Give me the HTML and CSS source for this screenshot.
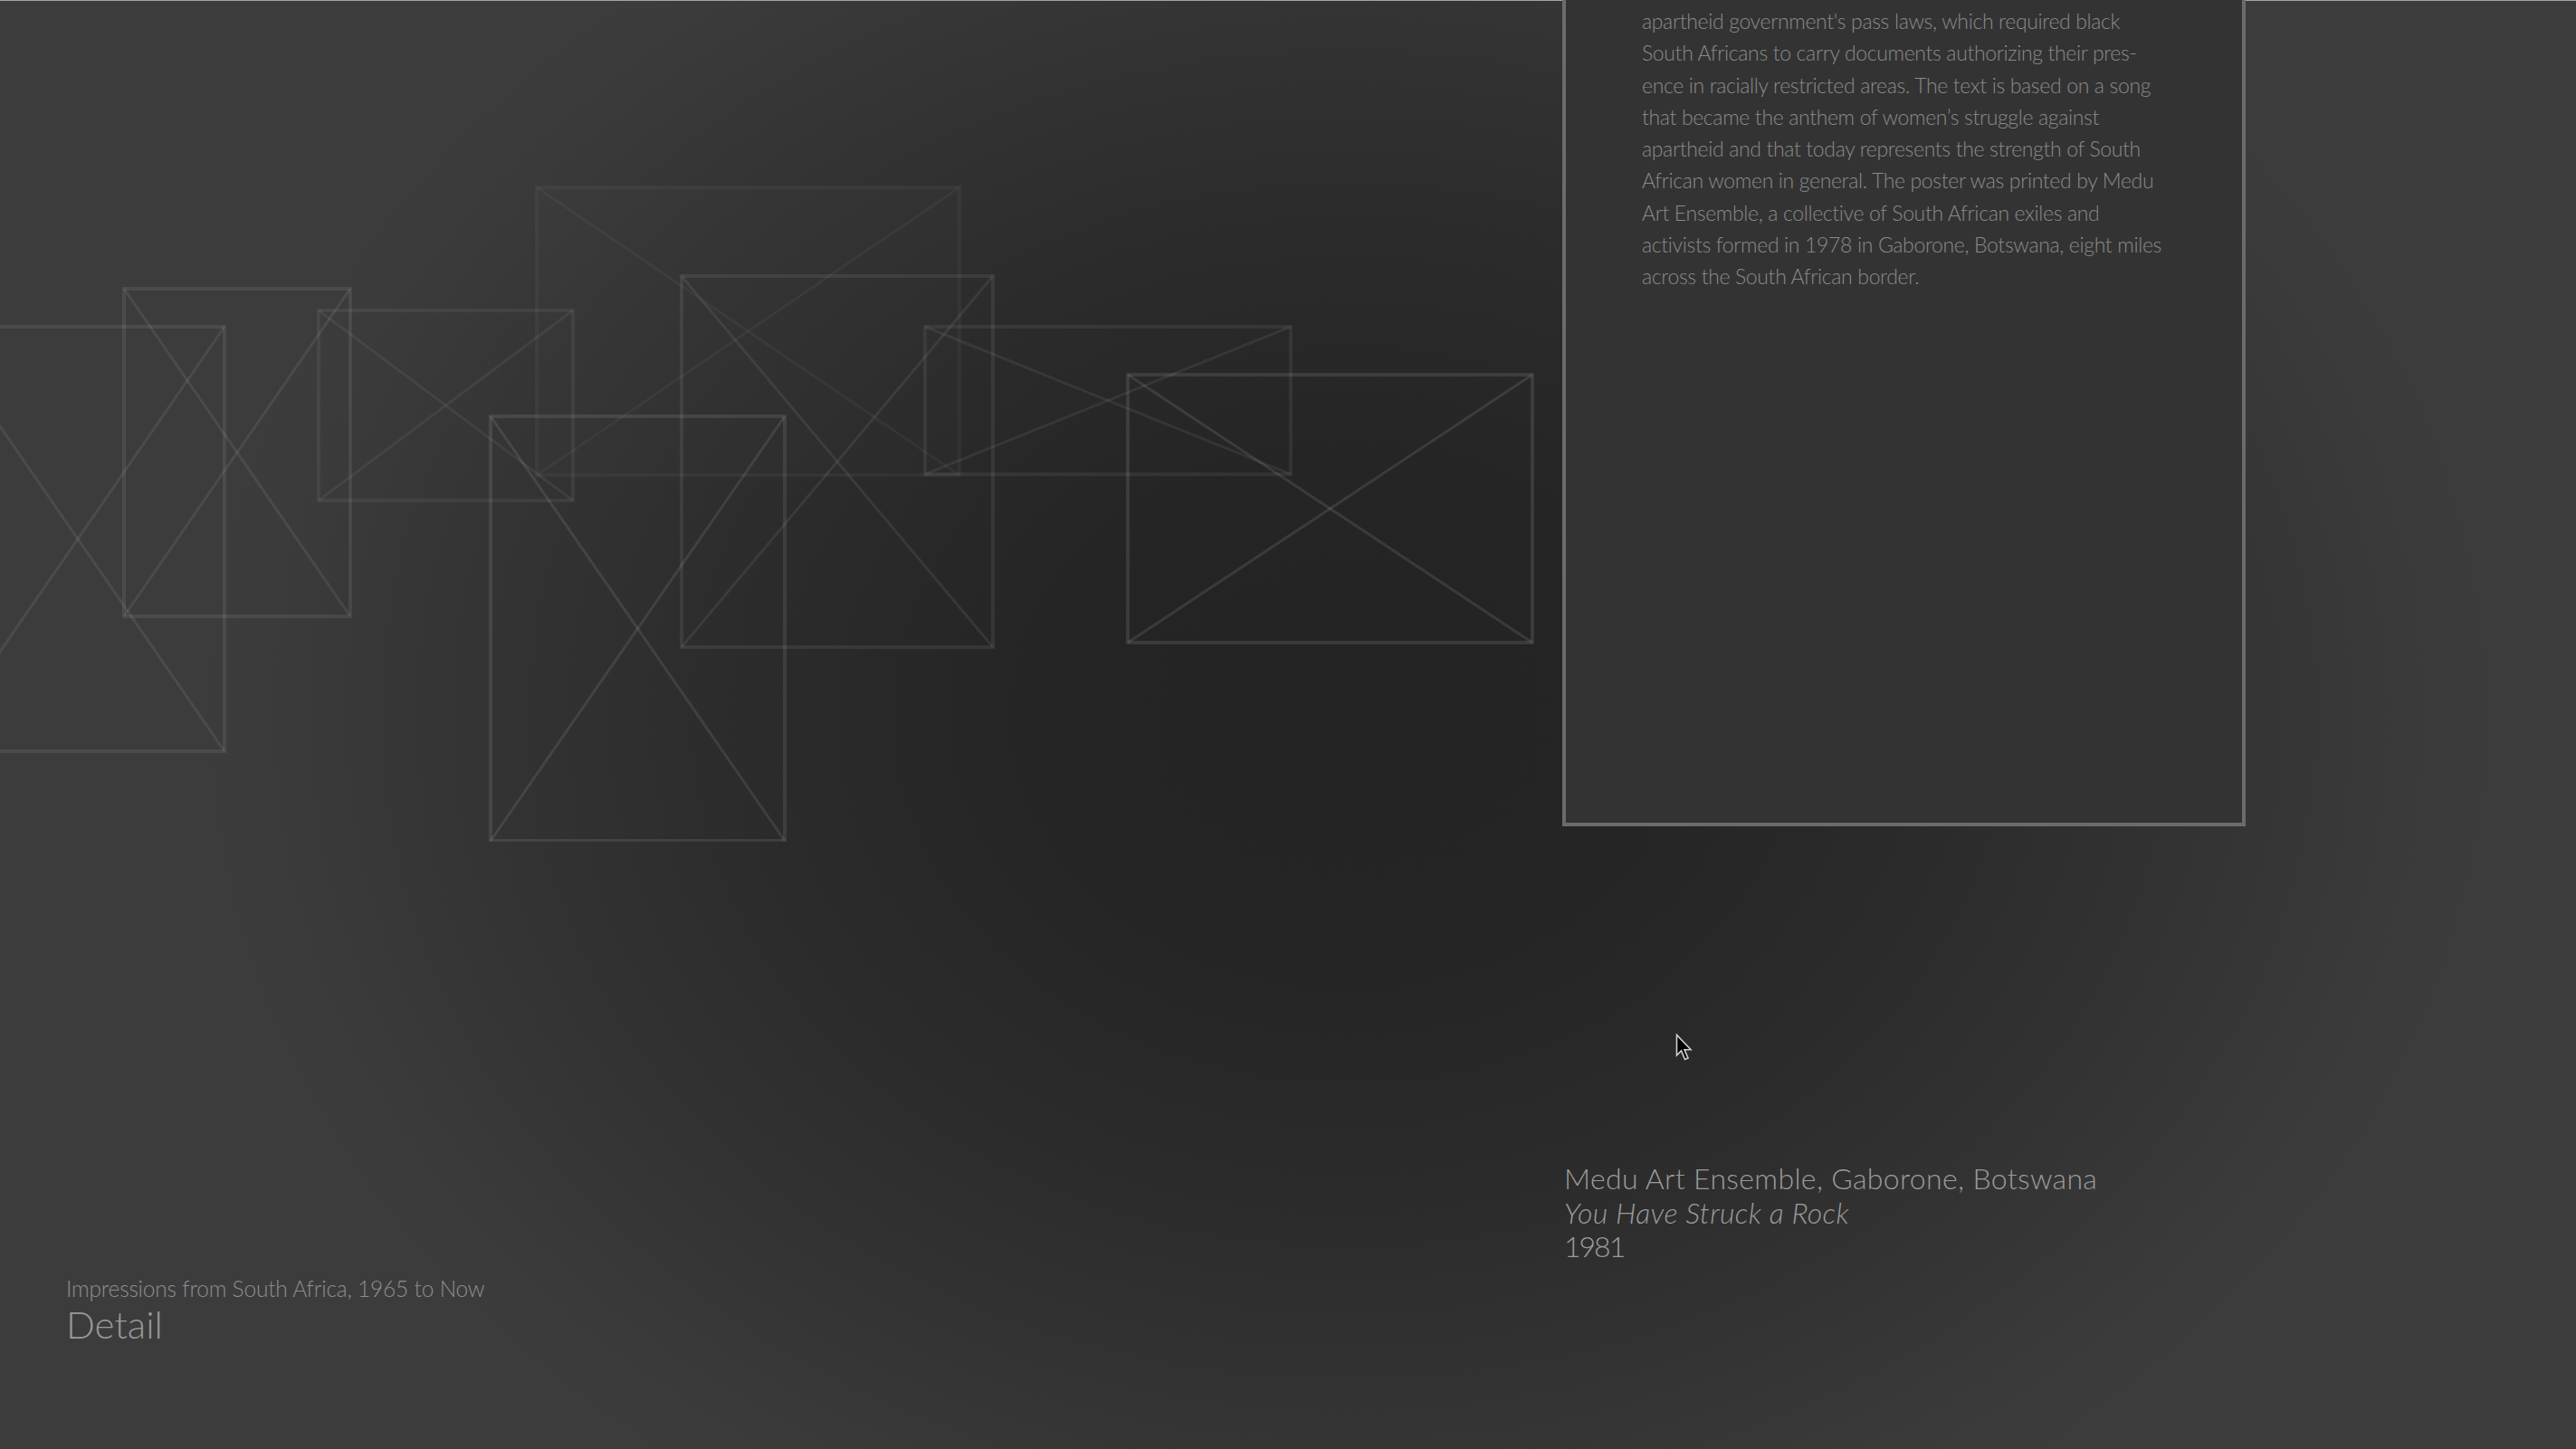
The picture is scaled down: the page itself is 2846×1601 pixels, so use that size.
FILE: index.html
```
<!DOCTYPE html>
<html lang="en">
<head>
<meta charset="utf-8">
<title>Detail — Impressions from South Africa, 1965 to Now</title>
<link rel="stylesheet" href="styles.css">
</head>
<body>
<main class="stage">
  <section class="collage" aria-label="Related works">
    <svg class="collage-svg" width="1726" height="930" viewBox="0 0 1726 930">
      <g class="ph ph-d">
        <rect x="593" y="207" width="467" height="318"/>
        <line x1="593" y1="207" x2="1060" y2="525"/><line x1="1060" y1="207" x2="593" y2="525"/>
      </g>
      <g class="ph ph-c">
        <rect x="352" y="343" width="281" height="210"/>
        <line x1="352" y1="343" x2="633" y2="553"/><line x1="633" y1="343" x2="352" y2="553"/>
      </g>
      <g class="ph ph-g">
        <rect x="1022" y="361" width="404" height="163"/>
        <line x1="1022" y1="361" x2="1426" y2="524"/><line x1="1426" y1="361" x2="1022" y2="524"/>
      </g>
      <g class="ph ph-f">
        <rect x="753" y="305" width="344" height="410"/>
        <line x1="753" y1="305" x2="1097" y2="715"/><line x1="1097" y1="305" x2="753" y2="715"/>
      </g>
      <g class="ph ph-a">
        <rect x="-76" y="361" width="324" height="469"/>
        <line x1="-76" y1="361" x2="248" y2="830"/><line x1="248" y1="361" x2="-76" y2="830"/>
      </g>
      <g class="ph ph-b">
        <rect x="137" y="319" width="250" height="362"/>
        <line x1="137" y1="319" x2="387" y2="681"/><line x1="387" y1="319" x2="137" y2="681"/>
      </g>
      <g class="ph ph-e">
        <rect x="542" y="460" width="325" height="469"/>
        <line x1="542" y1="460" x2="867" y2="929"/><line x1="867" y1="460" x2="542" y2="929"/>
      </g>
      <g class="ph ph-h">
        <rect x="1246" y="414" width="447" height="296"/>
        <line x1="1246" y1="414" x2="1693" y2="710"/><line x1="1693" y1="414" x2="1246" y2="710"/>
      </g>
    </svg>
  </section>

  <aside class="panel">
    <p class="panel-text">apartheid government's pass laws, which required black<br>South Africans to carry documents authorizing their pres-<br>ence in racially restricted areas. The text is based on a song<br>that became the anthem of women’s struggle against<br>apartheid and that today represents the strength of South<br>African women in general. The poster was printed by Medu<br>Art Ensemble, a collective of South African exiles and<br>activists formed in 1978 in Gaborone, Botswana, eight miles<br>across the South African border.</p>
  </aside>

  <header class="series">
    <p class="series-name">Impressions from South Africa, 1965 to Now</p>
    <h1 class="series-view">Detail</h1>
  </header>

  <div class="caption">
    <p class="caption-artist">Medu Art Ensemble, Gaborone, Botswana</p>
    <p class="caption-title">You Have Struck a Rock</p>
    <p class="caption-year">1981</p>
  </div>
</main>

<svg class="cursor" width="22" height="32" viewBox="0 0 22 32" aria-hidden="true">
  <path d="M1.5 1.5 L1.5 24 L6.5 19 L10.5 28.5 L14 27 L10 17.8 L17 17.8 Z" fill="#000" stroke="#cfcfcf" stroke-width="1.6" stroke-linejoin="miter"/>
</svg>
</body>
</html>
```

FILE: styles.css
```
html, body {
  margin: 0;
  padding: 0;
}

body {
  width: 2846px;
  height: 1601px;
  overflow: hidden;
  position: relative;
  font-family: Lato, "Open Sans", "Liberation Sans", sans-serif;
  font-weight: 300;
  background:
    linear-gradient(#a3a3a3, #a3a3a3) top left / 100% 1px no-repeat,
    radial-gradient(ellipse 1260px 1020px at 1490px 790px,
      #232323 0%, #252525 28%, #2b2b2b 52%, #333333 75%, #3b3b3b 95%, #3c3c3c 100%);
  background-color: #3c3c3c;
}

p, h1 {
  margin: 0;
  font-weight: 300;
}

.stage {
  display: grid;
  grid-template-columns: 1726px 755px 1fr;
  grid-template-rows: 930px 1fr;
  height: 1601px;
}

/* ---------- collage of placeholder artworks ---------- */
.collage {
  grid-column: 1;
  grid-row: 1;
  overflow: hidden;
}

.collage-svg {
  display: block;
}

.ph {
  fill: none;
  stroke: #ffffff;
}
.ph rect { stroke-width: 4; }
.ph line { stroke-width: 3; }

.ph-a { stroke-opacity: 0.08; }
.ph-b { stroke-opacity: 0.08; }
.ph-c { stroke-opacity: 0.06; }
.ph-d { stroke-opacity: 0.04; }
.ph-d rect { fill: #ffffff; fill-opacity: 0.012; }
.ph-e { stroke-opacity: 0.095; }
.ph-f { stroke-opacity: 0.075; }
.ph-g { stroke-opacity: 0.065; }
.ph-h { stroke-opacity: 0.1; }

/* ---------- description panel ---------- */
.panel {
  grid-column: 2;
  grid-row: 1;
  align-self: start;
  box-sizing: border-box;
  height: 913px;
  background: #333333;
  border: 4px solid #6b6b6b;
  border-top: none;
  padding: 6px 0 0 84px;
}

.panel-text {
  font-size: 23px;
  line-height: 35.3px;
  letter-spacing: -0.35px;
  color: #8a8a8a;
  white-space: nowrap;
}

/* ---------- series title (bottom left) ---------- */
.series {
  grid-column: 1;
  grid-row: 2;
  padding: 479px 0 0 73px;
}

.series-name {
  font-size: 24.5px;
  line-height: 30px;
  color: #8e8e8e;
  letter-spacing: -0.2px;
}

.series-view {
  font-size: 42px;
  line-height: 48px;
  color: #999999;
}

/* ---------- caption (bottom right) ---------- */
.caption {
  grid-column: 2;
  grid-row: 2;
  padding: 353px 0 0 2px;
  color: #9b9b9b;
  font-size: 32px;
  line-height: 37.5px;
  letter-spacing: 0.35px;
  white-space: nowrap;
}

.caption-title {
  font-style: italic;
}

.caption-year {
  letter-spacing: -2px;
}

/* ---------- mouse pointer overlay ---------- */
.cursor {
  position: absolute;
  left: 1851px;
  top: 1142px;
}
```
